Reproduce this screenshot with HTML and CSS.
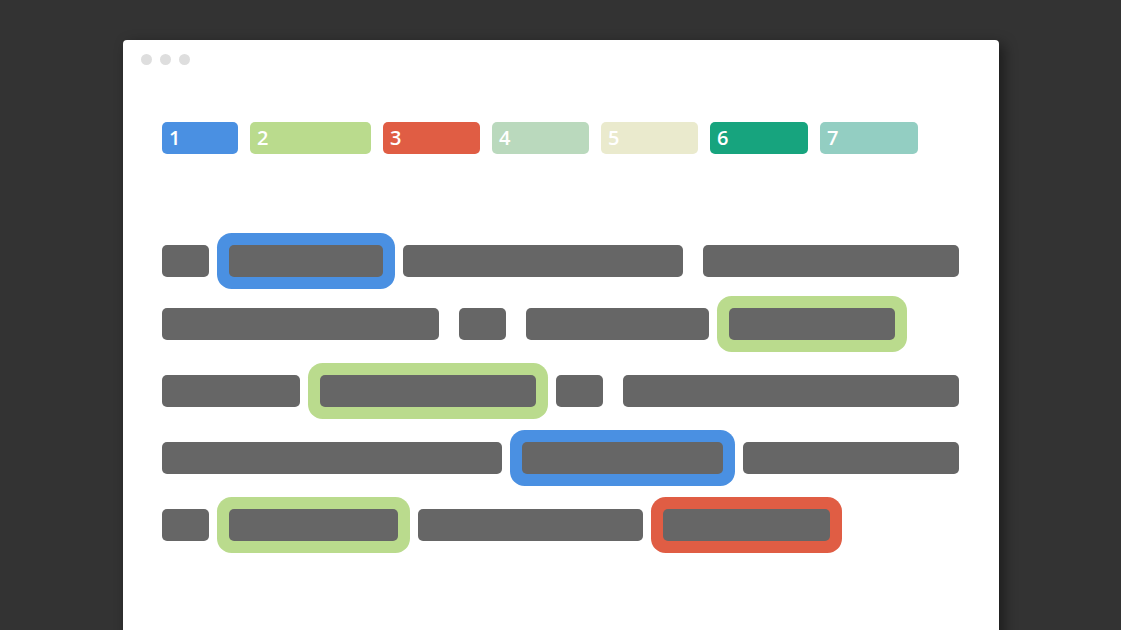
FILE: index.html
```html
<!DOCTYPE html>
<html lang="en">
<head>
<meta charset="utf-8">
<title>Highlight legend</title>
<link rel="stylesheet" href="styles.css">
</head>
<body>
<div class="window">
  <div class="titlebar">
    <span class="dot"></span><span class="dot"></span><span class="dot"></span>
  </div>
  <div class="content">
    <div class="legend">
      <div class="chip c1 w76">1</div>
      <div class="chip c2 w121">2</div>
      <div class="chip c3 w97">3</div>
      <div class="chip c4 w97">4</div>
      <div class="chip c5 w97">5</div>
      <div class="chip c6 w98">6</div>
      <div class="chip c7 w98">7</div>
    </div>
    <div class="rows">
      <div class="row first">
        <div class="bar" style="width:47px"></div>
        <div class="bar ring-blue" style="width:154px"></div>
        <div class="bar" style="width:280px"></div>
        <div class="bar grow"></div>
      </div>
      <div class="row">
        <div class="bar" style="width:277px"></div>
        <div class="bar" style="width:47px"></div>
        <div class="bar" style="width:183px"></div>
        <div class="bar ring-green" style="width:166px"></div>
      </div>
      <div class="row">
        <div class="bar" style="width:138px"></div>
        <div class="bar ring-green" style="width:216px"></div>
        <div class="bar" style="width:47px"></div>
        <div class="bar grow"></div>
      </div>
      <div class="row">
        <div class="bar" style="width:340px"></div>
        <div class="bar ring-blue" style="width:201px"></div>
        <div class="bar grow"></div>
      </div>
      <div class="row">
        <div class="bar" style="width:47px"></div>
        <div class="bar ring-green" style="width:169px"></div>
        <div class="bar" style="width:225px"></div>
        <div class="bar ring-red" style="width:167px"></div>
      </div>
    </div>
  </div>
</div>
</body>
</html>
```

FILE: styles.css
```css
html, body {
  margin: 0;
  padding: 0;
  height: 100%;
  overflow: hidden;
}
body {
  background: #333333;
  font-family: "Open Sans", "Liberation Sans", sans-serif;
}
.window {
  margin: 40px 0 0 123px;
  width: 876px;
  height: 640px;
  background: #ffffff;
  border-radius: 4px 4px 0 0;
  box-shadow: 5px 4px 14px rgba(0, 0, 0, 0.45);
}
.titlebar {
  display: flex;
  gap: 8px;
  padding: 14px 18px 12px;
}
.dot {
  width: 11px;
  height: 11px;
  border-radius: 50%;
  background: #dedede;
}
.content {
  padding: 0 40px 0 39px;
}
.legend {
  display: flex;
  gap: 12px;
  margin-top: 45px;
}
.chip {
  height: 32px;
  line-height: 32px;
  border-radius: 5px;
  color: #ffffff;
  font-size: 20px;
  font-weight: 600;
  padding-left: 7px;
  box-sizing: border-box;
}
.w76 { width: 76px; }
.w97 { width: 97px; }
.w98 { width: 98px; }
.w121 { width: 121px; }
.c1 { background: #4a90e2; }
.c2 { background: #badb8d; }
.c3 { background: #e05d44; }
.c4 { background: #bad9bd; }
.c5 { background: #eaeacd; }
.c6 { background: #17a47e; }
.c7 { background: #93cec2; }
.rows {
  display: flex;
  flex-direction: column;
  gap: 35px;
  margin-top: 91px;
}
.row {
  display: flex;
  gap: 20px;
}
.row.first {
  margin-bottom: -4px;
}
.bar {
  height: 32px;
  border-radius: 5px;
  background: #666666;
  flex: none;
}
.bar.grow {
  flex: 1;
}
.ring-blue { box-shadow: 0 0 0 12px #4a90e2; }
.ring-green { box-shadow: 0 0 0 12px #badb8d; }
.ring-red { box-shadow: 0 0 0 12px #e05d44; }
```
